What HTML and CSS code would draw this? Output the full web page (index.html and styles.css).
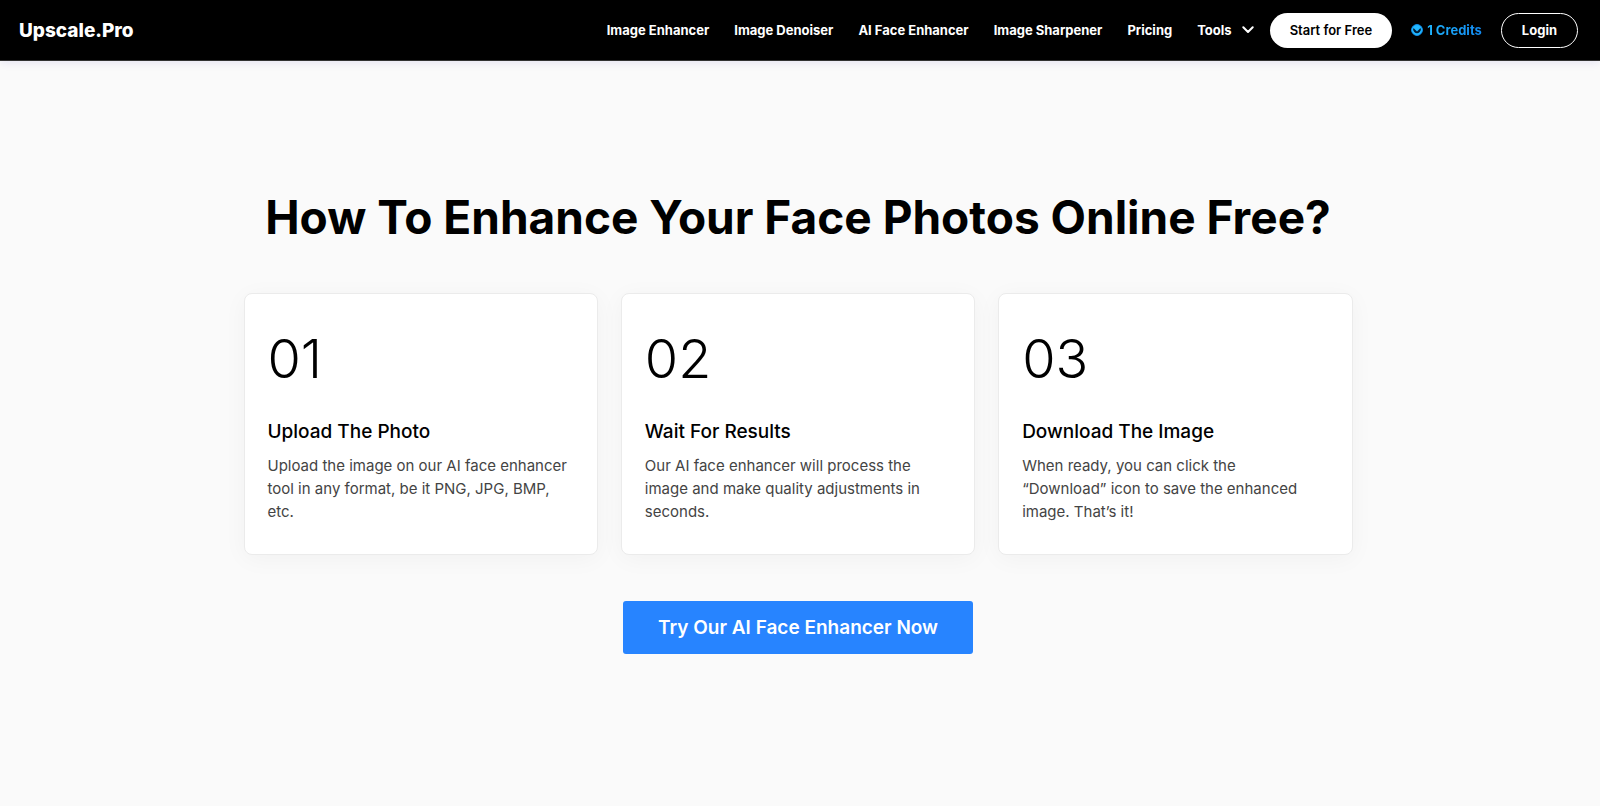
FILE: index.html
```html
<!DOCTYPE html>
<html lang="en">
<head>
<meta charset="utf-8">
<meta name="viewport" content="width=device-width, initial-scale=1">
<title>Upscale.Pro</title>
<link rel="stylesheet" href="styles.css">
</head>
<body>
<header class="site-header">
  <a class="logo" href="#">Upscale.Pro</a>
  <nav class="nav">
    <a href="#">Image Enhancer</a>
    <a href="#">Image Denoiser</a>
    <a href="#">AI Face Enhancer</a>
    <a href="#">Image Sharpener</a>
    <a href="#">Pricing</a>
    <button class="tools" type="button">Tools
      <svg width="12" height="8" viewBox="0 0 12 8" aria-hidden="true"><path d="M1.300 1.300 6 6l4.700-4.700" fill="none" stroke="currentColor" stroke-width="2" stroke-linecap="round" stroke-linejoin="round"/></svg>
    </button>
  </nav>
  <div class="account">
    <a class="pill pill-solid" href="#">Start for Free</a>
    <a class="credits" href="#">
      <svg width="12" height="12" viewBox="0 0 12 12" aria-hidden="true"><circle cx="6" cy="6" r="5.400" fill="#22b8ff" stroke="#1296f5"/><path d="M2 4.500c0 6.400 8 6.400 8 0H9L6 7.500 3 4.500z" fill="#001c38"/></svg>
      <span>1 Credits</span>
    </a>
    <a class="pill pill-outline" href="#">Login</a>
  </div>
</header>
<main class="how">
  <h1>How To Enhance Your Face Photos Online Free?</h1>
  <div class="steps">
    <article class="card">
      <div class="number">01</div>
      <h2>Upload The Photo</h2>
      <p>Upload the image on our AI face enhancer tool in any format, be it PNG, JPG, BMP, etc.</p>
    </article>
    <article class="card">
      <div class="number">02</div>
      <h2>Wait For Results</h2>
      <p>Our AI face enhancer will process the image and make quality adjustments in seconds.</p>
    </article>
    <article class="card">
      <div class="number">03</div>
      <h2>Download The Image</h2>
      <p>When ready, you can click the<br>“Download” icon to save the enhanced image. That’s it!</p>
    </article>
  </div>
  <a class="cta" href="#">Try Our AI Face Enhancer Now</a>
</main>
</body>
</html>
```
FILE: styles.css
```css
* { box-sizing: border-box; }
body {
  margin: 0;
  background: #fafafa;
  color: #000;
  font-family: Inter, "Liberation Sans", sans-serif;
}
a { color: inherit; text-decoration: none; }
.site-header {
  display: flex;
  align-items: center;
  min-height: 61px;
  padding: 0 22px 0 19px;
  background: #000;
  border-bottom: 1px solid #333;
  box-shadow: 0 2px 8px rgba(90, 80, 200, 0.12);
  color: #fff;
}
.logo { font-size: 19px; font-weight: 800; }
.nav {
  display: flex;
  align-items: center;
  gap: 25px;
  margin-left: auto;
  font-size: 13px;
  font-weight: 700;
  white-space: nowrap;
}
.tools {
  display: flex;
  align-items: center;
  gap: 10px;
  padding: 0;
  border: 0;
  background: none;
  color: inherit;
  font: inherit;
}
.account {
  display: flex;
  align-items: center;
  gap: 19px;
  margin-left: 16px;
  font-size: 13px;
  white-space: nowrap;
}
.pill {
  display: flex;
  align-items: center;
  height: 35px;
  padding: 0 20px;
  border-radius: 18px;
}
.pill-solid { background: #fff; color: #000; font-weight: 600; }
.pill-outline { border: 1px solid #fff; font-weight: 700; }
.credits { display: flex; align-items: center; gap: 4px; font-weight: 700; }
.credits span {
  background: linear-gradient(90deg, #1fb6ff, #1289f0);
  background-clip: text;
  color: transparent;
}
.how {
  display: flex;
  flex-direction: column;
  align-items: center;
  padding: 127px 24px 120px 20px;
}
h1 {
  margin: 0 0 47px;
  font-size: 46px;
  font-weight: 700;
  line-height: 58px;
  text-align: center;
}
.steps {
  display: grid;
  grid-template-columns: repeat(3, 1fr);
  gap: 23px;
  width: 100%;
  max-width: 1109px;
}
.card {
  padding: 36px 23px 31px;
  border: 1px solid #ebebeb;
  border-radius: 8px;
  background: #fff;
  box-shadow: 0 4px 24px rgba(0, 20, 10, 0.04);
}
.number { font-size: 54px; font-weight: 300; line-height: 58px; }
h2 { margin: 30px 0 8px; font-size: 19px; font-weight: 500; line-height: 28px; }
p { margin: 0; color: #444; font-size: 15px; font-weight: 400; line-height: 23px; }
.cta {
  margin-top: 46px;
  padding: 12px 35px;
  border-radius: 3px;
  background: #2784ff;
  color: #fff;
  font-size: 19px;
  font-weight: 600;
  line-height: 29px;
}
```
